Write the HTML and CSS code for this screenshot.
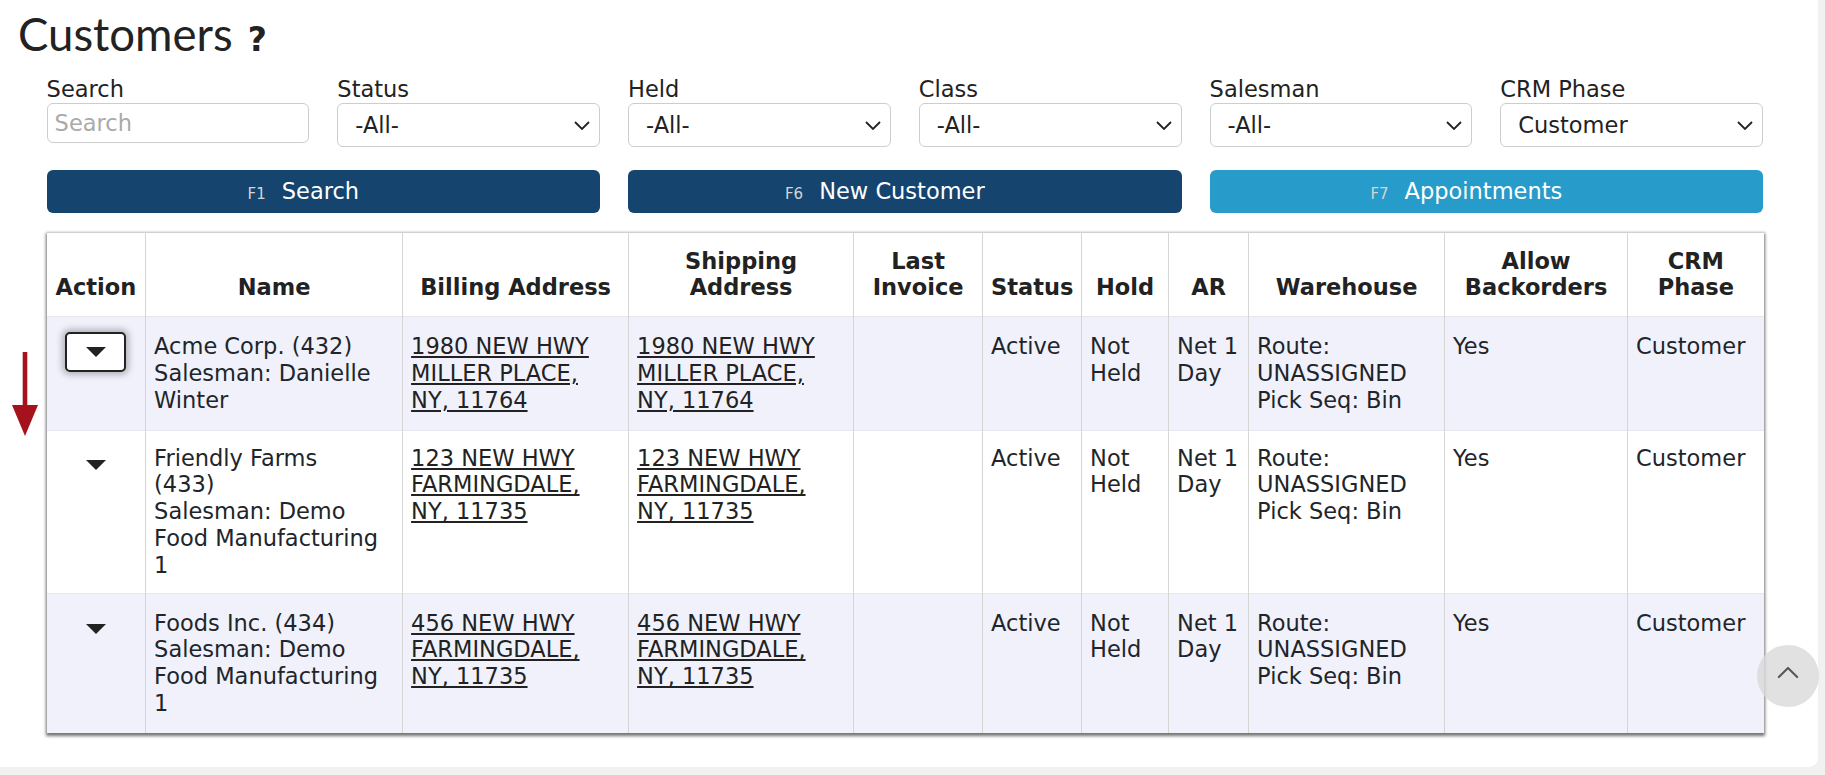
FILE: index.html
```html
<!DOCTYPE html>
<html lang="en">
<head>
<meta charset="utf-8">
<title>Customers</title>
<link rel="stylesheet" href="styles.css">
</head>
<body>
<div class="page">
  <div class="card">
    <h1 class="title">Customers<span class="help">?</span></h1>
    <div class="main">
      <div class="filters">
        <label class="field"><span class="label">Search</span><input class="input" type="text" placeholder="Search"></label>
        <label class="field"><span class="label">Status</span><select class="select"><option>-All-</option></select></label>
        <label class="field"><span class="label">Held</span><select class="select"><option>-All-</option></select></label>
        <label class="field"><span class="label">Class</span><select class="select"><option>-All-</option></select></label>
        <label class="field"><span class="label">Salesman</span><select class="select"><option>-All-</option></select></label>
        <label class="field"><span class="label">CRM Phase</span><select class="select"><option>Customer</option></select></label>
      </div>
      <div class="actions">
        <button class="btn btn-navy"><span class="key">F1</span>Search</button>
        <button class="btn btn-navy"><span class="key">F6</span>New Customer</button>
        <button class="btn btn-sky"><span class="key">F7</span>Appointments</button>
      </div>
      <table class="grid">
        <colgroup>
          <col class="c-action"><col class="c-name"><col class="c-bill"><col class="c-ship"><col class="c-inv"><col class="c-status"><col class="c-hold"><col class="c-ar"><col class="c-wh"><col class="c-back"><col class="c-crm">
        </colgroup>
        <thead>
          <tr>
            <th>Action</th><th>Name</th><th>Billing Address</th><th>Shipping Address</th><th>Last Invoice</th><th>Status</th><th>Hold</th><th>AR</th><th>Warehouse</th><th>Allow Backorders</th><th>CRM Phase</th>
          </tr>
        </thead>
        <tbody>
          <tr>
            <td class="action"><button class="toggle is-focused"><span class="caret"></span></button></td>
            <td class="name"><div>Acme Corp. (432)</div><div>Salesman: Danielle Winter</div></td>
            <td><a class="addr" href="#">1980 NEW HWY MILLER PLACE, NY, 11764</a></td>
            <td><a class="addr" href="#">1980 NEW HWY MILLER PLACE, NY, 11764</a></td>
            <td></td>
            <td>Active</td>
            <td>Not Held</td>
            <td>Net 1 Day</td>
            <td>Route: UNASSIGNED Pick Seq: Bin</td>
            <td>Yes</td>
            <td>Customer</td>
          </tr>
          <tr>
            <td class="action"><button class="toggle"><span class="caret"></span></button></td>
            <td class="name"><div>Friendly Farms (433)</div><div>Salesman: Demo Food Manufacturing 1</div></td>
            <td><a class="addr" href="#">123 NEW HWY FARMINGDALE, NY, 11735</a></td>
            <td><a class="addr" href="#">123 NEW HWY FARMINGDALE, NY, 11735</a></td>
            <td></td>
            <td>Active</td>
            <td>Not Held</td>
            <td>Net 1 Day</td>
            <td>Route: UNASSIGNED Pick Seq: Bin</td>
            <td>Yes</td>
            <td>Customer</td>
          </tr>
          <tr>
            <td class="action"><button class="toggle"><span class="caret"></span></button></td>
            <td class="name"><div>Foods Inc. (434)</div><div>Salesman: Demo Food Manufacturing 1</div></td>
            <td><a class="addr" href="#">456 NEW HWY FARMINGDALE, NY, 11735</a></td>
            <td><a class="addr" href="#">456 NEW HWY FARMINGDALE, NY, 11735</a></td>
            <td></td>
            <td>Active</td>
            <td>Not Held</td>
            <td>Net 1 Day</td>
            <td>Route: UNASSIGNED Pick Seq: Bin</td>
            <td>Yes</td>
            <td>Customer</td>
          </tr>
        </tbody>
      </table>
    </div>
  </div>
  <svg class="marker" viewBox="0 0 26 85" width="26" height="85" aria-hidden="true">
    <rect x="10.7" y="0" width="4.6" height="54" fill="#a5111c"/>
    <polygon points="0,53 26,53 13,84" fill="#a5111c"/>
  </svg>
  <button class="to-top" aria-label="Back to top">
    <svg viewBox="0 0 24 14" width="22" height="13"><path d="M2 12L12 2l10 10" fill="none" stroke="#555" stroke-width="2.2" stroke-linecap="round" stroke-linejoin="round"/></svg>
  </button>
</div>
</body>
</html>
```

FILE: styles.css
```css
html, body {
  margin: 0;
  padding: 0;
}
body {
  background: #f1f1f1;
  font-family: "DejaVu Sans", Verdana, sans-serif;
  font-size: 22.5px;
  line-height: 26.8px;
  color: #212529;
  overflow: hidden;
}
.page {
  position: relative;
  width: 1825px;
  height: 775px;
}
.card {
  box-sizing: border-box;
  width: 1818px;
  height: 767px;
  background: #fff;
  border-bottom-right-radius: 9px;
  padding: 8px 0 0 18px;
}
.title {
  margin: 0;
  font-family: Lato, "Open Sans", sans-serif;
  font-weight: 400;
  font-size: 45.5px;
  line-height: 52px;
  height: 52px;
  color: #222;
}
.help {
  font-family: "DejaVu Sans", sans-serif;
  font-weight: bold;
  font-size: 33px;
  line-height: 1;
  margin-left: 15px;
  color: #222;
}
.main {
  width: 1716.5px;
  margin-left: 28.6px;
  margin-top: 16.4px;
}
.filters {
  display: grid;
  grid-template-columns: repeat(6, 1fr);
  column-gap: 28px;
}
.field {
  display: flex;
  flex-direction: column;
  align-items: stretch;
}
.label {
  display: block;
  color: #222;
}
.input, .select {
  box-sizing: border-box;
  font-family: "DejaVu Sans", Verdana, sans-serif;
  font-size: 22.5px;
  color: #222;
  background-color: #fff;
  border: 1px solid #cdcdcd;
  border-radius: 6px;
  margin: 0;
  outline: none;
}
.input {
  height: 40px;
  padding: 0 7px;
  align-self: flex-start;
  width: 100%;
}
.input::placeholder {
  color: #aaa;
}
.select {
  height: 44px;
  padding: 0 34px 0 17px;
  appearance: none;
  -webkit-appearance: none;
  background-image: url("data:image/svg+xml,%3Csvg xmlns='http://www.w3.org/2000/svg' viewBox='0 0 16 9'%3E%3Cpath d='M1 1l7 7 7-7' fill='none' stroke='%23222' stroke-width='1.8'/%3E%3C/svg%3E");
  background-repeat: no-repeat;
  background-position: right 9px center;
  background-size: 16px 9px;
}
.actions {
  display: grid;
  grid-template-columns: repeat(3, 1fr);
  column-gap: 28px;
  margin-top: 22.8px;
}
.btn {
  height: 43px;
  border: none;
  border-radius: 6px;
  color: #fff;
  font-family: "DejaVu Sans", Verdana, sans-serif;
  font-size: 22.5px;
  padding: 0 40px 0 0;
  display: flex;
  align-items: baseline;
  justify-content: center;
  line-height: 43px;
}
.btn-navy {
  background: #15456e;
}
.btn-sky {
  background: #279bc9;
}
.key {
  font-size: 15px;
  color: #d4d4d4;
  margin-right: 16px;
}
.grid {
  width: 100%;
  margin-top: 18.6px;
  border-collapse: collapse;
  table-layout: fixed;
  border-top: 1px solid #d0d0d0;
  box-shadow: 0 2px 3px 1px rgba(0, 0, 0, 0.55);
}
.c-action { width: 99px; }
.c-name { width: 257px; }
.c-bill { width: 226px; }
.c-ship { width: 225px; }
.c-inv { width: 129px; }
.c-status { width: 99px; }
.c-hold { width: 87px; }
.c-ar { width: 80px; }
.c-wh { width: 196px; }
.c-back { width: 183px; }
.c-crm { width: 136px; }
.grid th {
  font-weight: bold;
  text-align: center;
  vertical-align: bottom;
  padding: 15px 8px;
  border-left: 1px solid #d6d6d6;
  background: #fff;
  color: #222;
}
.grid td {
  vertical-align: top;
  text-align: left;
  padding: 16px 8px;
  border-left: 1px solid #d6d6d6;
  border-top: 1px solid #e6e6ee;
}
.grid tbody tr:nth-child(2) td {
  padding-top: 14px;
  padding-bottom: 14px;
}
.grid th:first-child, .grid td:first-child {
  border-left: none;
}
.grid tbody tr:nth-child(odd) {
  background: #f0f1fb;
}
.grid td.name {
  padding-right: 23px;
}
.grid td.action {
  text-align: center;
  padding: 15px 0 0;
}
.addr {
  color: #222;
  text-decoration: underline;
}
.toggle {
  box-sizing: border-box;
  width: 61px;
  height: 40px;
  border: 2px solid transparent;
  border-radius: 5px;
  background: transparent;
  display: inline-flex;
  align-items: center;
  justify-content: center;
  padding: 0;
  margin: 0;
}
.toggle.is-focused {
  border-color: #222;
  background: #fff;
  box-shadow: 0 0 6px 3px rgba(0, 0, 0, 0.25);
}
.caret {
  width: 0;
  height: 0;
  border-left: 10px solid transparent;
  border-right: 10px solid transparent;
  border-top: 10px solid #222;
}
.marker {
  position: absolute;
  left: 12px;
  top: 352px;
}
.to-top {
  position: absolute;
  left: 1757px;
  top: 645px;
  width: 62px;
  height: 62px;
  border-radius: 50%;
  border: none;
  padding: 0;
  background: rgba(218, 218, 218, 0.8);
  display: flex;
  align-items: center;
  justify-content: center;
}
.to-top svg {
  margin-top: -8px;
}
```
